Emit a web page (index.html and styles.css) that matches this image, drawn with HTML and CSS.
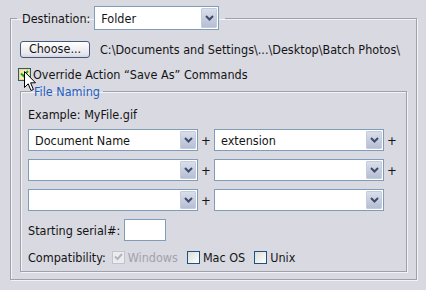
FILE: index.html
```html
<!DOCTYPE html>
<html>
<head>
<meta charset="utf-8">
<link rel="stylesheet" href="styles.css">
</head>
<body>
<fieldset class="group outer">
  <legend class="dest">
    <div class="dest-inner">
      <span class="dest-label">Destination:</span>
      <div class="combo combo-dest">
        <span class="combo-text">Folder</span>
        <span class="combo-btn"><svg width="9" height="6" viewBox="0 0 9 6"><path d="M1 1 L4.5 4.5 L8 1" fill="none" stroke="#3e4b6c" stroke-width="2"/></svg></span>
      </div>
    </div>
  </legend>
  <div class="choose-row">
    <button class="btn">Choose...</button>
    <span class="path">C:\Documents and Settings\...\Desktop\Batch Photos\</span>
  </div>
  <div class="override-row">
    <span class="check check-hot"><svg width="9" height="8" viewBox="0 0 9 8"><path d="M1 3.5 L3.5 6 L8 1" fill="none" stroke="#21a121" stroke-width="2"/></svg></span>
    <span class="override-label">Override Action “Save As” Commands</span>
    <svg class="cursor" width="13" height="21" viewBox="0 0 13 21"><path d="M0.5 0.5 V16.5 L4.2 12.8 L7 19.5 L9.4 18.5 L6.6 11.8 H11.5 Z" fill="#fff" stroke="#000" stroke-linejoin="round"/></svg>
  </div>
  <fieldset class="group inner">
    <legend class="naming">File Naming</legend>
    <div class="example">Example: MyFile.gif</div>
    <div class="name-grid">
      <div class="combo"><span class="combo-text">Document Name</span><span class="combo-btn"><svg width="9" height="6" viewBox="0 0 9 6"><path d="M1 1 L4.5 4.5 L8 1" fill="none" stroke="#3e4b6c" stroke-width="2"/></svg></span></div>
      <span class="plus">+</span>
      <div class="combo"><span class="combo-text">extension</span><span class="combo-btn"><svg width="9" height="6" viewBox="0 0 9 6"><path d="M1 1 L4.5 4.5 L8 1" fill="none" stroke="#3e4b6c" stroke-width="2"/></svg></span></div>
      <span class="plus">+</span>
      <div class="combo"><span class="combo-text"></span><span class="combo-btn"><svg width="9" height="6" viewBox="0 0 9 6"><path d="M1 1 L4.5 4.5 L8 1" fill="none" stroke="#3e4b6c" stroke-width="2"/></svg></span></div>
      <span class="plus">+</span>
      <div class="combo"><span class="combo-text"></span><span class="combo-btn"><svg width="9" height="6" viewBox="0 0 9 6"><path d="M1 1 L4.5 4.5 L8 1" fill="none" stroke="#3e4b6c" stroke-width="2"/></svg></span></div>
      <span class="plus">+</span>
      <div class="combo"><span class="combo-text"></span><span class="combo-btn"><svg width="9" height="6" viewBox="0 0 9 6"><path d="M1 1 L4.5 4.5 L8 1" fill="none" stroke="#3e4b6c" stroke-width="2"/></svg></span></div>
      <span class="plus">+</span>
      <div class="combo"><span class="combo-text"></span><span class="combo-btn"><svg width="9" height="6" viewBox="0 0 9 6"><path d="M1 1 L4.5 4.5 L8 1" fill="none" stroke="#3e4b6c" stroke-width="2"/></svg></span></div>
      <span class="plus"></span>
    </div>
    <div class="serial-row">
      <span class="serial-label">Starting serial#:</span>
      <span class="textbox"></span>
    </div>
    <div class="compat-row">
      <span class="compat-label">Compatibility:</span>
      <span class="opt disabled"><span class="check check-disabled"><svg width="9" height="8" viewBox="0 0 9 8"><path d="M1 3.5 L3.5 6 L8 1" fill="none" stroke="#b4b4bc" stroke-width="2"/></svg></span>Windows</span>
      <span class="opt"><span class="check"></span>Mac OS</span>
      <span class="opt"><span class="check"></span>Unix</span>
    </div>
  </fieldset>
</fieldset>
</body>
</html>
```
FILE: styles.css
```css
* { box-sizing: border-box; }

body {
  margin: 0;
  width: 426px;
  height: 290px;
  overflow: hidden;
  background: #d9d9e1;
  color: #141414;
  font-family: "DejaVu Sans Condensed", "DejaVu Sans", sans-serif;
  font-size: 12.5px;
  line-height: 15px;
}

.group {
  border: 1px solid #a0a0a9;
  box-shadow: 1px 1px 0 #f3f3f7, inset 1px 1px 0 #f3f3f7;
  margin: 0;
  min-width: 0;
}

.outer {
  margin: 6px 0 0 10px;
  width: 407px;
  height: 274px;
  padding: 0 9px 0 9px;
}

.dest {
  margin-left: -3px;
  padding: 0 6px 0 5px;
  margin-bottom: -4px;
}

.dest-inner {
  display: flex;
  align-items: center;
  gap: 4px;
}

.combo {
  display: flex;
  align-items: stretch;
  height: 22px;
  width: 170px;
  border: 1px solid #7f9db9;
  background: #fff;
  padding: 1px;
}

.combo-dest {
  width: 125px;
  height: 24px;
}

.combo-text {
  flex: 1;
  padding-left: 5px;
  display: flex;
  align-items: center;
  white-space: nowrap;
}

.combo-btn {
  width: 16px;
  display: flex;
  align-items: center;
  justify-content: center;
  border: 1px solid #c4cbdc;
  border-radius: 1px;
  background: linear-gradient(#d9deea, #b6bed3);
}

.choose-row {
  display: flex;
  align-items: center;
  gap: 10px;
  margin-top: 14px;
  height: 18px;
}

.btn {
  width: 70px;
  height: 17px;
  padding: 0;
  font: inherit;
  line-height: 14px;
  color: #141414;
  border: 1px solid #45597c;
  border-radius: 3px;
  background: linear-gradient(#ffffff, #e6e6ec 80%, #d4d4de);
}

.path { white-space: nowrap; }

.override-row {
  position: relative;
  display: flex;
  align-items: center;
  gap: 2px;
  margin-top: 9px;
  margin-left: -2px;
  height: 14px;
}

.check {
  width: 13px;
  height: 13px;
  flex: none;
  display: flex;
  align-items: center;
  justify-content: center;
  border: 1px solid #1c5180;
  background: linear-gradient(135deg, #dcdcd7, #ffffff);
}

.check-hot {
  border-color: #2a5a6e;
  background: linear-gradient(135deg, #f4e3a0, #fdf8dc);
  box-shadow: inset 0 0 0 1px #f2d98a;
}

.check-disabled {
  border-color: #c3c3cb;
  background: #ececf0;
}

.cursor {
  position: absolute;
  left: 6px;
  top: 4px;
}

.inner {
  margin: 3px 0 0 0;
  width: 387px;
  padding: 0 7px 6px 7px;
}

.naming {
  margin-left: 3px;
  padding: 0 3px;
  color: #1f5ec2;
}

.example {
  margin-top: 8px;
  height: 15px;
}

.name-grid {
  display: grid;
  grid-template-columns: 170px 16px 170px 16px;
  grid-auto-rows: 22px;
  row-gap: 8px;
  margin-top: 7px;
}

.plus {
  display: flex;
  align-items: center;
  justify-content: center;
  font-size: 13px;
}

.serial-row {
  display: flex;
  align-items: center;
  gap: 4px;
  margin-top: 8px;
  height: 22px;
}

.textbox {
  width: 42px;
  height: 22px;
  border: 1px solid #7f9db9;
  background: #fff;
}

.compat-row {
  display: flex;
  align-items: center;
  gap: 9px;
  margin-top: 8px;
  height: 16px;
}

.compat-label { margin-right: -3px; }

.opt {
  display: flex;
  align-items: center;
  gap: 3px;
}

.disabled { color: #a2a2ad; }
```
